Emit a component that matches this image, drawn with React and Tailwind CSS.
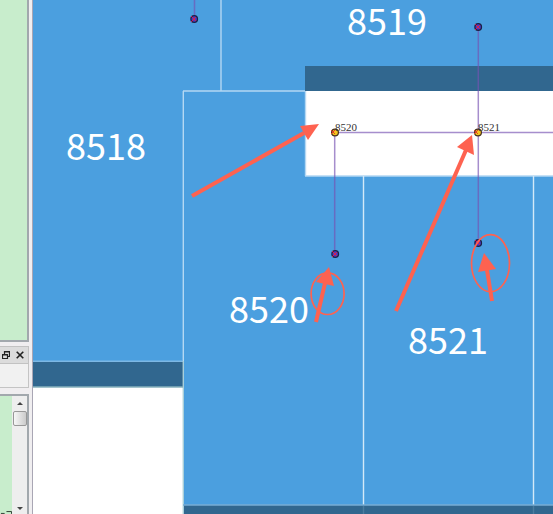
const nodes = [
  { x: 194, y: 19 },
  { x: 478, y: 27 },
  { x: 335, y: 254 },
  { x: 478, y: 243 },
];

const junctions = [
  { x: 335, y: 132, label: "8520" },
  { x: 478, y: 132, label: "8521" },
];

const parcels = [
  { x: 66, y: 160, label: "8518" },
  { x: 347, y: 35, label: "8519" },
  { x: 229, y: 323, label: "8520" },
  { x: 408, y: 354, label: "8521" },
];

const arrows = [
  { from: [192, 196], neck: [304, 133], head: "319,124 300,126 308,140" },
  { from: [396, 311], neck: [466, 150], head: "472,135 457,147 474,155" },
  { from: [316, 322], neck: [325, 283], head: "329,267 316,282 334,286" },
  { from: [492, 301], neck: [487, 270], head: "484,253 478,272 496,269" },
];

function MapCanvas() {
  return (
    <svg className="block h-full w-full" role="img" aria-label="Parcel map">
      <g transform="translate(-33 0)">
        <rect x="33" y="0" width="4000" height="4000" fill="#4b9fdf" />
        <rect x="33" y="361" width="150" height="26" fill="#31678f" />
        <rect x="33" y="387" width="150" height="4000" fill="#fff" />
        <rect x="305" y="66" width="4000" height="25" fill="#31678f" />
        <rect x="305" y="91" width="4000" height="85" fill="#fff" />
        <rect x="183" y="505" width="4000" height="4000" fill="#31678f" />

        <g stroke="#b4d8f3" strokeWidth="1.4" fill="none">
          <path d="M221 0V91M183 91H305M183.3 91V361M305.5 91V176M305 176H4000" />
          <path d="M363.5 176V505M533.5 176V505" stroke="#d3e9f8" />
          <path d="M33 361.3H183" stroke="#7db8e4" />
          <path d="M183.3 361V4000" stroke="#a9cfda" />
          <path d="M33 387H183" stroke="#86b1bd" />
          <path d="M183 505H4000" stroke="#77add4" />
          <path d="M363.5 506V4000M533.5 506V4000" stroke="#4b7c9f" />
        </g>

        <g stroke="#7651b2" strokeOpacity="0.65" strokeWidth="1.5" fill="none">
          <path d="M194.5 0V19M478.3 27V243M334.7 132V254M335 132.5H4000" />
        </g>

        {nodes.map((n) => (
          <g key={`${n.x}-${n.y}`}>
            <circle cx={n.x + 0.2} cy={n.y} r="3.3" fill="#4a3bc4" stroke="#1d2045" strokeWidth="1.3" />
            <path d={`M${n.x - 3} ${n.y - 3}l5 5m0 -4l-5 5`} stroke="#d51e50" strokeWidth="1" />
          </g>
        ))}

        {junctions.map((j) => (
          <g key={j.label}>
            <circle cx={j.x} cy={j.y + 0.5} r="3.4" fill="#f4c51f" stroke="#47301d" strokeWidth="1.2" />
            <path d={`M${j.x - 4} ${j.y - 2}l4 4m0 -4l-4 4`} stroke="#e23d2c" strokeWidth="1" />
            <text x={j.x} y={j.y - 1} fill="#333" className="font-['Liberation_Serif',serif] text-[11px]">
              {j.label}
            </text>
          </g>
        ))}

        {parcels.map((p) => (
          <text
            key={p.label}
            x={p.x}
            y={p.y}
            fill="#fff"
            className="font-['Noto_Sans_CJK_SC',sans-serif] text-[36px]"
          >
            {p.label}
          </text>
        ))}

        <g fill="none" stroke="#fe6250">
          <ellipse cx="327.6" cy="293.7" rx="16.5" ry="20.8" strokeWidth="1.7" />
          <ellipse cx="490.5" cy="263.2" rx="19" ry="28.5" strokeWidth="1.7" />
          {arrows.map((a) => (
            <g key={a.head}>
              <path d={`M${a.from[0]} ${a.from[1]}L${a.neck[0]} ${a.neck[1]}`} strokeWidth="4" />
              <polygon points={a.head} fill="#fe6250" stroke="none" />
            </g>
          ))}
        </g>
      </g>
    </svg>
  );
}

function SidePanels() {
  return (
    <aside className="flex w-[33px] shrink-0 flex-col border-r border-[#a9a6b4] bg-[#f0eef0] pr-[3px]">
      <div className="h-[342px] shrink-0 border-r-2 border-b-2 border-[#a2a8ad] bg-[#c8edcc]" />
      <div className="mt-1 flex h-[18px] shrink-0 items-center justify-between border border-l-0 border-[#c2c2c2] bg-[#dcdcdc] pr-1 pl-[2px]">
        <button type="button" aria-label="Float panel">
          <svg className="block h-2 w-2" viewBox="0 0 8 8" fill="none" stroke="#222" strokeWidth="1.2">
            <path d="M2.5 3V.5H7.5V5.5H6M2 1H8" />
            <path d="M.5 3.5H5.5V7.5H.5ZM0 4H6" />
          </svg>
        </button>
        <button type="button" aria-label="Close panel">
          <svg className="block h-2 w-2" viewBox="0 0 8 8" stroke="#222" strokeWidth="1.6">
            <path d="M.7.7L7.3 7.3M7.3.7L.7 7.3" />
          </svg>
        </button>
      </div>
      <div className="h-6 shrink-0 border-r border-b border-[#c4c4c4] bg-[#f1f1f1]" />
      <div className="mt-[6px] flex min-h-0 flex-1 border-t-2 border-r-2 border-[#a2a8ad]">
        <div className="flex flex-1 items-end overflow-hidden bg-[#c8edcc]">
          <svg className="block h-[3px] w-full" viewBox="0 0 13 3" stroke="#26352a" fill="none">
            <path d="M1 2.5H5M7 .5H12.5V3" />
          </svg>
        </div>
        <div className="flex w-[15px] shrink-0 flex-col items-center bg-[#eeeeee]">
          <button type="button" aria-label="Scroll up" className="flex h-[15px] w-full items-center justify-center">
            <svg className="block h-[3px] w-[6px]" viewBox="0 0 6 3" fill="#444">
              <path d="M0 3L3 0L6 3Z" />
            </svg>
          </button>
          <div className="h-[15px] w-[14px] rounded-xs border border-[#989898] bg-linear-to-r from-[#f7f7f7] to-[#cbcbcb]" />
          <div className="flex-1" />
          <button type="button" aria-label="Scroll down" className="flex h-3 w-full items-center justify-center">
            <svg className="block h-[3px] w-[6px]" viewBox="0 0 6 3" fill="#444">
              <path d="M0 0L3 3L6 0Z" />
            </svg>
          </button>
        </div>
      </div>
    </aside>
  );
}

export default function App() {
  return (
    <div className="flex h-screen w-full overflow-hidden">
      <SidePanels />
      <main className="min-w-0 flex-1">
        <MapCanvas />
      </main>
    </div>
  );
}
